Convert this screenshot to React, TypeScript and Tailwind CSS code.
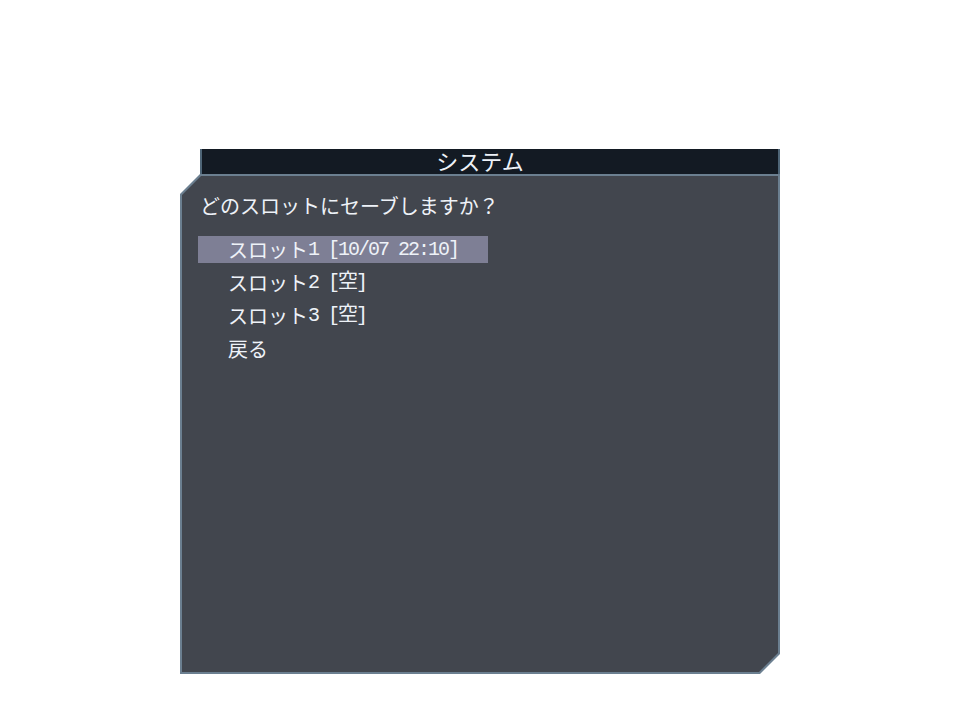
import React from 'react';

interface Slot {
  label: string;
  detail?: string;
}

const slots: Slot[] = [
  { label: 'スロット', detail: '1 [10/07 22:10]' },
  { label: 'スロット', detail: '2 [空]' },
  { label: 'スロット', detail: '3 [空]' },
  { label: '戻る' },
];

const jp = "font-['Noto_Sans_CJK_JP',sans-serif]";
const mono = "font-['Liberation_Mono','Noto_Sans_CJK_JP',monospace] tracking-[-2px]";

const App: React.FC = () => {
  const selected = 0;

  return (
    <div className="min-h-screen w-[960px] bg-white pt-[149px]">
      <div className="mx-auto w-[600px]">
        {/* title bar */}
        <div className="ml-[20px] flex h-[25px] items-center border-x-2 border-[#4e6577] bg-[#131a23]">
          <span className={`${jp} -ml-[20px] -mt-[3px] w-[calc(100%+20px)] text-center text-[22px] leading-none text-[#eef2f8]`}>
            システム
          </span>
        </div>

        {/* body panel with chamfered corners */}
        <div className="h-[500px] bg-[#6b7f90] p-[2px] [clip-path:polygon(20px_0,100%_0,100%_calc(100%-20px),calc(100%-20px)_100%,0_100%,0_20px)]">
          <div className="h-full bg-[#42464e] pl-[16px] pt-[19px] [clip-path:polygon(19px_0,100%_0,100%_calc(100%-19px),calc(100%-19px)_100%,0_100%,0_19px)]">
            <p className={`${jp} ml-[2px] text-[20px] leading-[22px] text-[#eef2f8]`}>
              どのスロットにセーブしますか？
            </p>

            <div className="mt-[19px] flex flex-col gap-[6px]">
              {slots.map((slot, i) => (
                <div
                  key={i}
                  className={`flex h-[27px] w-[290px] items-center pl-[30px] text-[20px] text-[#eef2f8] ${
                    i === selected ? 'bg-[#7e7f95]' : ''
                  }`}
                >
                  <span className={jp}>{slot.label}</span>
                  {slot.detail && <span className={mono}>{slot.detail}</span>}
                </div>
              ))}
            </div>
          </div>
        </div>
      </div>
    </div>
  );
};

export default App;
